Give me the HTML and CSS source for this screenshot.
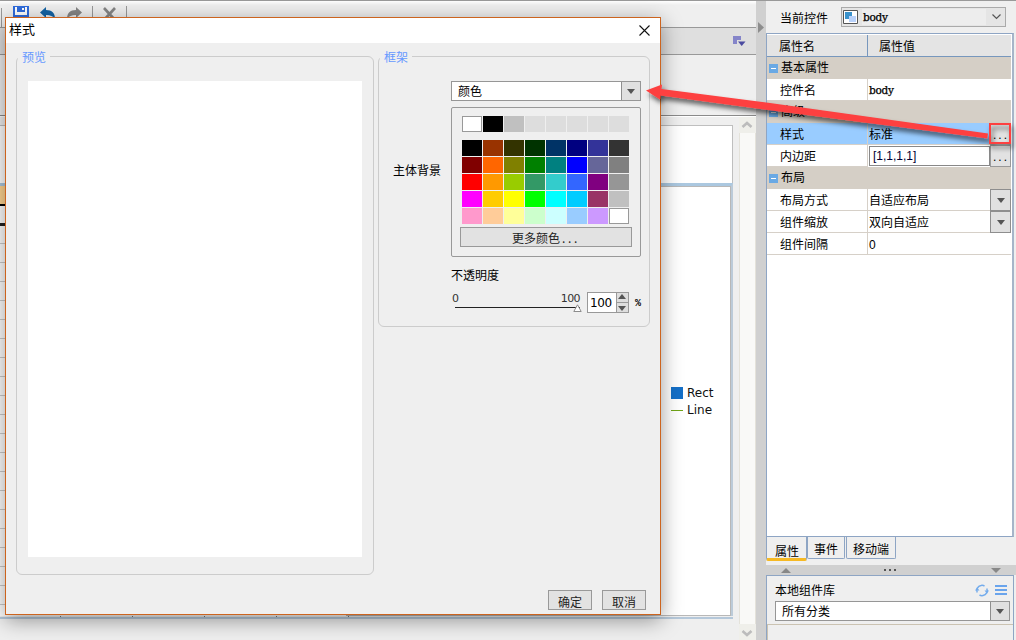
FILE: index.html
```
<!DOCTYPE html>
<html lang="zh-CN">
<head>
<meta charset="utf-8">
<title>样式</title>
<link rel="stylesheet" href="styles.css">
</head>
<body>
<div class="app">
  <main class="main">
    <div class="toolbar">
      <i class="tsep tsep-first"></i>
      <svg class="ico-save" width="16" height="16" viewBox="0 0 16 16"><path d="M0 0h16v16H0z" fill="#2f6bdc"/><path d="M2 1h12v8H2z" fill="#fff"/><path d="M4 0h8v6H4z" fill="#2f6bdc"/><path d="M9 2h2v2H9z" fill="#fff"/></svg>
      <svg class="ico-undo" width="16" height="16" viewBox="0 0 16 16"><path d="M0 5.500L6 0v3c6 0 9 3 9 9-2-3-4.500-4-9-4v3z" fill="#1464a5"/></svg>
      <svg class="ico-redo" width="16" height="16" viewBox="0 0 16 16"><path d="M15 5.500L9 0v3C3 3 0 6 0 12c2-3 4.500-4 9-4v3z" fill="#858585"/></svg>
      <i class="tsep"></i>
      <svg class="ico-del" width="13" height="16" viewBox="0 0 13 16"><path d="M1 1l11 12M12 1L1 13" stroke="#858585" stroke-width="2.600"/></svg>
      <i class="tsep"></i>
    </div>
    <div class="subbar">
      <svg width="13" height="11" viewBox="0 0 13 11"><path d="M0 0h8v4H4v4H0z" fill="#8585c9"/><path d="M5 5.500h7.500L8.700 10z" fill="#4b4ba0"/></svg>
    </div>
    <div class="gap-area"></div>
    <div class="canvas">
      <div class="sheet">
        <div class="sheet-edge"></div>
        <div class="sheet-top"></div>
        <div class="sheet-body">
          <div class="grid-left"><div class="cell-head"></div><div class="cell-dark"></div><div class="cell-lines"></div></div>
          <div class="chart">
            <div class="legend">
              <div class="legend-item"><i class="swatch-rect"></i>Rect</div>
              <div class="legend-item"><i class="swatch-line"></i>Line</div>
            </div>
          </div>
        </div>
        <div class="sheet-foot"><i></i><i></i><i></i><i></i><i></i></div>
      </div>
      <div class="scrollbar">
        <svg width="16" height="16" viewBox="0 0 16 16"><path d="M3.500 10L8 6l4.500 4" fill="none" stroke="#bcbcbc" stroke-width="2.600"/></svg>
        <div class="track"></div>
        <svg width="16" height="16" viewBox="0 0 16 16"><path d="M3.500 7L8 11l4.500-4" fill="none" stroke="#bcbcbc" stroke-width="2.600"/></svg>
      </div>
    </div>
  </main>
  <div class="splitter"><svg width="6" height="11" viewBox="0 0 6 11"><path d="M0 0l6 5.500L0 11z" fill="#8d8d8d"/></svg></div>
  <aside class="side">
    <div class="current">
      <span>当前控件</span>
      <div class="widget-select">
        <svg width="15" height="14" viewBox="0 0 15 14"><path d="M.5.500h14v13H.5z" fill="#fff" stroke="#555"/><path d="M2 2h7v7H2z" fill="#3a92cc"/><path d="M6 6h7v6H6z" fill="#b9d2fb"/></svg>
        <span class="simsun widget-name">body</span>
        <svg width="9" height="6" viewBox="0 0 9 6"><path d="M.5.500l4 4 4-4" fill="none" stroke="#555" stroke-width="1.200"/></svg>
      </div>
    </div>
    <div class="props">
      <div class="prow phead"><span class="pname">属性名</span><span class="pval">属性值</span></div>
      <div class="pgroup"><i class="minus"></i>基本属性</div>
      <div class="prow"><span class="pname">控件名</span><span class="pval simsun">body</span></div>
      <div class="pgroup"><i class="minus"></i>高级</div>
      <div class="prow selected"><span class="pname">样式</span><span class="pval">标准</span><span class="more">...</span></div>
      <div class="prow"><span class="pname">内边距</span><span class="pval boxed">[1,1,1,1]</span><span class="more">...</span></div>
      <div class="pgroup"><i class="minus"></i>布局</div>
      <div class="prow"><span class="pname">布局方式</span><span class="pval">自适应布局</span><span class="drop"></span></div>
      <div class="prow"><span class="pname">组件缩放</span><span class="pval">双向自适应</span><span class="drop"></span></div>
      <div class="prow"><span class="pname">组件间隔</span><span class="pval latin">0</span></div>
    </div>
    <div class="tabs"><span class="tab active">属性</span><span class="tab events">事件</span><span class="tab mobile">移动端</span></div>
    <div class="hsplit"><i class="up"></i><span class="dots"><i></i><i></i><i></i></span><i class="down"></i></div>
    <div class="library">
      <div class="lib-head"><span>本地组件库</span>
        <svg width="14" height="13" viewBox="0 0 14 13"><path d="M2.200 8.500A5 5 0 0 1 6 1.500M4.500 11A5 5 0 0 0 8 11.500M6 1.500A5 5 0 0 1 9.500 2M11.800 4.500A5 5 0 0 1 8 11.500" fill="none" stroke="#74acec" stroke-width="1.500"/><path d="M0 6.500h4.500L2 3.500zM9.500 6.500H14L12 9.500z" fill="#74acec"/></svg>
        <i class="menu"></i>
      </div>
      <div class="combo lib-combo"><span>所有分类</span><span class="drop"></span></div>
      <div class="lib-body"></div>
    </div>
  </aside>
</div>

<div class="dialog">
  <div class="title"><span>样式</span><svg width="11" height="11" viewBox="0 0 11 11"><path d="M.5.500l10 10M10.500.500l-10 10" stroke="#111" stroke-width="1.100"/></svg></div>
  <div class="dialog-body">
    <section class="group preview"><h2>预览</h2><div class="paper"></div></section>
    <section class="group frame"><h2>框架</h2>
      <div class="form">
        <span class="form-label">主体背景</span>
        <div class="form-col">
          <div class="combo"><span>颜色</span><span class="drop"></span></div>
          <div class="palette">
            <div class="colors recent"><i class="c-white"></i><i class="c-000"></i><i class="c-c0"></i><i></i><i></i><i></i><i></i><i></i></div>
            <div class="colors">
              <i class="c-000"></i><i class="c-930"></i><i class="c-330"></i><i class="c-030"></i><i class="c-036"></i><i class="c-navy"></i><i class="c-339"></i><i class="c-333"></i>
              <i class="c-maroon"></i><i class="c-f60"></i><i class="c-olive"></i><i class="c-green"></i><i class="c-teal"></i><i class="c-blue"></i><i class="c-669"></i><i class="c-gray"></i>
              <i class="c-red"></i><i class="c-f90"></i><i class="c-9c0"></i><i class="c-396"></i><i class="c-3cc"></i><i class="c-36f"></i><i class="c-purple"></i><i class="c-969696"></i>
              <i class="c-f0f"></i><i class="c-fc0"></i><i class="c-ff0"></i><i class="c-0f0"></i><i class="c-0ff"></i><i class="c-0cf"></i><i class="c-936"></i><i class="c-c0"></i>
              <i class="c-f9c"></i><i class="c-fc9"></i><i class="c-ff9"></i><i class="c-cfc"></i><i class="c-cff"></i><i class="c-9cf"></i><i class="c-c9f"></i><i class="c-white"></i>
            </div>
            <button class="btn more-colors">更多颜色<span class="ellipsis">...</span></button>
          </div>
          <div class="opacity-label">不透明度</div>
          <div class="opacity">
            <div class="slider"><div class="scale"><span>0</span><span>100</span></div><div class="rail"></div>
              <svg class="thumb" width="9" height="8" viewBox="0 0 9 8"><path d="M4.500.800l3.700 6.700H.800z" fill="#fff" stroke="#8c8c8c"/></svg>
            </div>
            <div class="spinner"><span>100</span><div class="steps"><i class="step-up"></i><i class="step-mid"></i><i class="step-down"></i></div></div>
            <span class="percent">%</span>
          </div>
        </div>
      </div>
    </section>
  </div>
  <div class="actions"><button class="btn">确定</button><button class="btn">取消</button></div>
</div>

<svg class="callout" width="1016" height="640" viewBox="0 0 1016 640">
  <defs><filter id="shade" x="-5%" y="-30%" width="110%" height="170%"><feDropShadow dx="2" dy="4" stdDeviation="2.500" flood-color="#000" flood-opacity=".6"/></filter></defs>
  <g filter="url(#shade)">
    <path d="M646 90.500L662 84.500L661.500 89L770 103L988 133.500L987.300 138.500L768 110L660.500 95.500L660 99.500z" fill="#fd4040"/>
    <rect x="990" y="124" width="20" height="19" fill="none" stroke="#fd4040" stroke-width="2"/>
  </g>
</svg>
</body>
</html>
```
FILE: styles.css
```
* { box-sizing: border-box; }
body { margin: 0; width: 1016px; height: 640px; overflow: hidden; position: relative; background: #efefef; color: #000; font: 12px/16px "Liberation Sans", "Noto Sans CJK SC", sans-serif; }
svg { display: block; flex: none; }
i { display: block; flex: none; }
.simsun { font-family: "DejaVu Serif", "Liberation Serif", serif; font-size: 10.500px; letter-spacing: -.25px; -webkit-text-stroke: .25px #000; }
.app { display: flex; height: 640px; border-top: 1px solid #999; }

/* workspace behind the dialog */
.main { width: 756px; display: flex; flex-direction: column; }
.toolbar { height: 26px; display: flex; padding: 5px 0 0 1px; background: linear-gradient(#fff 0, #efefef 4px); overflow: hidden; }
.tsep { width: 1px; height: 30px; background: #999; }
.tsep-first { margin-top: 2px; }
.ico-save { margin-left: 11px; }
.ico-undo { margin: 1px 0 0 11px; }
.ico-redo { margin: 1px 9px 0 11px; }
.ico-del { margin: 1px 10px 0; }
.subbar { height: 28px; padding: 8px 10px; border: solid #999; border-width: 1px 0; background: #dfdfdf; display: flex; justify-content: flex-end; }
.gap-area { height: 61px; border-bottom: 1px solid #8a8a8a; box-shadow: 0 1px #fff; }
.canvas { flex: 1; display: flex; justify-content: space-between; padding-top: 1px; min-height: 0; }
.sheet { width: 733px; height: 510px; margin-top: -1px; }
.sheet-edge { height: 10px; border-bottom: 1px solid #bfbfbf; }
.sheet-top { height: 57px; background: #fff; border-right: 1px solid #bfbfbf; }
.sheet-body { height: 433px; display: flex; border-top: 3px solid #abc8e0; border-right: 2px solid #bccbd9; }
.grid-left { width: 346px; background: #fff; }
.cell-head { height: 20px; background: #ffd591; border-bottom: 2px solid #000; }
.cell-dark { height: 20px; border-bottom: 3px solid #222; }
.cell-lines { height: 390px; background: repeating-linear-gradient(transparent 0 17px, #ccc 17px 18px, transparent 18px 19px); }
.chart { flex: 1; background: #fff; border: 1px solid #b8b8b8; padding: 198px 0 0 324px; }
.legend { display: flex; flex-direction: column; gap: 1px; font-family: "DejaVu Sans", sans-serif; font-size: 12px; color: #111; }
.legend-item { display: flex; align-items: center; gap: 4px; }
.swatch-rect { width: 12px; height: 12px; background: #1570c8; }
.swatch-line { width: 12px; height: 1px; margin-top: 1px; background: #70a517; }
.sheet-foot { height: 3px; display: flex; gap: 71px; padding-left: 60px; border-bottom: 2px solid #b5c8da; }
.sheet-foot i { width: 1px; height: 1px; background: #777; }
.scrollbar { width: 17px; display: flex; flex-direction: column; background: #efefea; }
.track { height: 494px; background: #f9f9f7; border: solid #e4e2da; border-width: 0 1px; }

.splitter { width: 10px; background: #d0d0d0; padding: 21px 0 0 2px; }

/* property panel */
.side { width: 250px; display: flex; flex-direction: column; }
.current { height: 32px; display: flex; align-items: flex-start; padding: 6px 10px 0 14px; justify-content: space-between; line-height: 24px; }
.widget-select { width: 165px; height: 20px; border: 1px solid #aaa; background: #e5e5e5; display: flex; align-items: center; padding: 0 4px 0 1px; }
.widget-name { flex: 1; height: 16px; line-height: 17px; background: #ededed; margin: 0 6px 0 4px; padding-left: 1px; }
.props { width: 248px; height: 504px; border: 1px solid #8ea5c4; border-right: 2px solid #a6b5c9; background: #fff; padding-top: 1px; }
.prow, .pgroup { height: 22px; display: flex; line-height: 24px; width: 244px; }
.pname { width: 101px; padding-left: 13px; border-right: 1px solid #d6d0c8; border-bottom: 1px solid #d6d0c8; }
.pval { flex: 1; padding-left: 1px; border-bottom: 1px solid #d6d0c8; }
.pval.simsun { line-height: 22px; }
.phead { background: #e4e4e4; border-bottom: 1px solid #7797bd; }
.phead .pname { padding-left: 12px; border-right-color: #7797bd; border-bottom: 0; }
.phead .pval { padding-left: 11px; border-bottom: 0; }
.pgroup { background: #d5cfc6; align-items: center; gap: 3px; padding-left: 2px; }
.minus { width: 9px; height: 9px; border: solid #6aa9e4; border-width: 4px 2px; background: #fff; }
.selected { background: #99ccff; }
.boxed { border: 1px solid #888; line-height: 18px; margin: 1px 0 1px 1px; padding-left: 3px; font-size: 12px; color: #003; }
.more { width: 21px; border: 1px solid #999; background: #e2e2e2; padding-left: 2px; letter-spacing: 2px; line-height: 22px; }
.drop { width: 21px; border: 1px solid #8e8e8e; background: #e0e0e0; display: flex; align-items: center; justify-content: center; flex: none; }
.drop::before { content: ""; border: solid transparent; border-width: 5px 4.500px 0; border-top-color: #555; }
.tabs { height: 28px; display: flex; line-height: 26px; align-items: flex-start; }
.tab { height: 22px; border: 1px solid #8ea5c4; border-top: 0; text-align: center; border-radius: 0 0 2px 2px; }
.active { width: 41px; height: 24px; line-height: 31px; padding-left: 1px; border-bottom: 3px solid #f6b924; }
.events { width: 38px; }
.mobile { width: 50px; margin-left: 1px; }
.hsplit { height: 10px; background: #d0d0d0; display: flex; align-items: center; padding: 0 15px; justify-content: space-between; }
.up { border: solid transparent; border-width: 0 5px 5px; border-bottom-color: #888; }
.down { border: solid transparent; border-width: 5px 5px 0; border-top-color: #888; }
.dots { display: flex; gap: 3px; margin-right: 2px; }
.dots i { width: 2px; height: 2px; background: #555; }
.library { flex: 1; width: 248px; border: 1px solid #8ea5c4; border-bottom: 0; display: flex; flex-direction: column; }
.lib-head { height: 25px; display: flex; align-items: center; padding: 3px 6px 0 8px; }
.lib-head span { flex: 1; padding-top: 2px; }
.menu { width: 12px; height: 10px; margin-left: 6px; border: solid #6aa4ec; border-width: 2px 0; background: linear-gradient(transparent 2px, #6aa4ec 2px 4px, transparent 4px); }
.combo { height: 20px; border: 1px solid #969696; background: #fff; display: flex; justify-content: space-between; line-height: 21px; padding-left: 6px; }
.combo .drop { width: 19px; border-width: 0 0 0 1px; }
.lib-combo { margin: 0 3px 0 8px; }
.lib-body { margin-top: 3px; flex: 1; border: solid #cbc3b2; border-width: 1px 0 0 1px; }

/* style dialog */
.dialog { position: absolute; left: 5px; top: 17px; width: 656px; height: 598px; background: #efefef; border: 1px solid #cc641f; box-shadow: 0 5px 20px rgba(0,0,0,.4); }
.title { height: 25px; background: #fff; display: flex; justify-content: space-between; align-items: center; padding: 0 10px 0 3px; font-size: 13px; }
.title span { padding-bottom: 2px; }
.title svg { margin-bottom: 1px; }
.dialog-body { display: flex; align-items: flex-start; gap: 4px; padding: 13px 10px 0; }
.group { border: 1px solid #ccc; border-radius: 6px; }
.group h2 { width: 32px; height: 14px; margin: -7px 0 0 1px; padding-left: 4px; background: #efefef; color: #6699ff; font: 12px/14px "Noto Sans CJK SC", sans-serif; }
.preview { width: 358px; height: 519px; }
.paper { width: 334px; height: 476px; margin: 17px 0 0 11px; background: #fff; }
.frame { width: 272px; height: 271px; }
.form { display: flex; padding: 17px 8px 0 14px; }
.form-label { width: 58px; padding-top: 82px; }
.form-col { width: 190px; }
.palette { height: 150px; margin-top: 6px; border: 1px solid #999; border-radius: 2px; padding: 8px 8px 0; }
.colors { display: grid; grid-template-columns: repeat(8, 20px); grid-auto-rows: 16px; gap: 1px; padding-left: 2px; }
.recent { margin-bottom: 8px; }
.colors i { background: #ddd; }
.btn { width: 44px; height: 20px; padding: 0; border: 1px solid #999; background: #e2e2e2; color: #222; font: 12px/21px "Noto Sans CJK SC", sans-serif; }
.more-colors { display: block; width: 172px; margin-top: 3px; line-height: 20px; }
.ellipsis { letter-spacing: 2.600px; padding-left: 2px; }
.opacity-label { padding-top: 11px; }
.opacity { display: flex; padding-top: 8px; }
.slider { width: 136px; padding: 0 7px 0 1px; position: relative; }
.scale { display: flex; justify-content: space-between; font: 11px/14px "DejaVu Sans", sans-serif; letter-spacing: -.6px; color: #333; }
.rail { height: 1px; width: 125px; margin: 1px 0 0 3px; background: #222; }
.thumb { position: absolute; left: 122px; top: 12px; }
.spinner { width: 42px; height: 21px; border: 1px solid #999; background: #fff; display: flex; justify-content: space-between; font: 12px/20px "DejaVu Sans", sans-serif; padding-left: 2px; }
.spinner span { letter-spacing: -.4px; }
.steps { width: 12px; border-left: 1px solid #999; background: #dedede; display: flex; flex-direction: column; justify-content: space-around; align-items: center; }
.step-up { border: solid transparent; border-width: 0 4px 5px; border-bottom-color: #555; }
.step-mid { width: 11px; height: 1px; background: #999; }
.step-down { border: solid transparent; border-width: 5px 4px 0; border-top-color: #555; }
.percent { font: bold 10px/24px "Liberation Mono", monospace; margin-left: 6px; }
.actions { display: flex; gap: 10px; justify-content: flex-end; padding: 15px 14px 0 0; }
.callout { position: absolute; left: 0; top: 0; pointer-events: none; }

.colors .c-white { background: #fff; border: 1px solid #999; }
.colors .c-000 { background: #000; }
.colors .c-c0 { background: #c0c0c0; }
.colors .c-930 { background: #993300; }
.colors .c-330 { background: #333300; }
.colors .c-030 { background: #003300; }
.colors .c-036 { background: #003366; }
.colors .c-navy { background: #000080; }
.colors .c-339 { background: #333399; }
.colors .c-333 { background: #333; }
.colors .c-maroon { background: #800000; }
.colors .c-f60 { background: #ff6600; }
.colors .c-olive { background: #808000; }
.colors .c-green { background: #008000; }
.colors .c-teal { background: #008080; }
.colors .c-blue { background: #0000ff; }
.colors .c-669 { background: #666699; }
.colors .c-gray { background: #808080; }
.colors .c-red { background: #ff0000; }
.colors .c-f90 { background: #ff9900; }
.colors .c-9c0 { background: #99cc00; }
.colors .c-396 { background: #339966; }
.colors .c-3cc { background: #33cccc; }
.colors .c-36f { background: #3366ff; }
.colors .c-purple { background: #800080; }
.colors .c-969696 { background: #969696; }
.colors .c-f0f { background: #ff00ff; }
.colors .c-fc0 { background: #ffcc00; }
.colors .c-ff0 { background: #ffff00; }
.colors .c-0f0 { background: #00ff00; }
.colors .c-0ff { background: #00ffff; }
.colors .c-0cf { background: #00ccff; }
.colors .c-936 { background: #993366; }
.colors .c-f9c { background: #ff99cc; }
.colors .c-fc9 { background: #ffcc99; }
.colors .c-ff9 { background: #ffff99; }
.colors .c-cfc { background: #ccffcc; }
.colors .c-cff { background: #ccffff; }
.colors .c-9cf { background: #99ccff; }
.colors .c-c9f { background: #cc99ff; }
```
